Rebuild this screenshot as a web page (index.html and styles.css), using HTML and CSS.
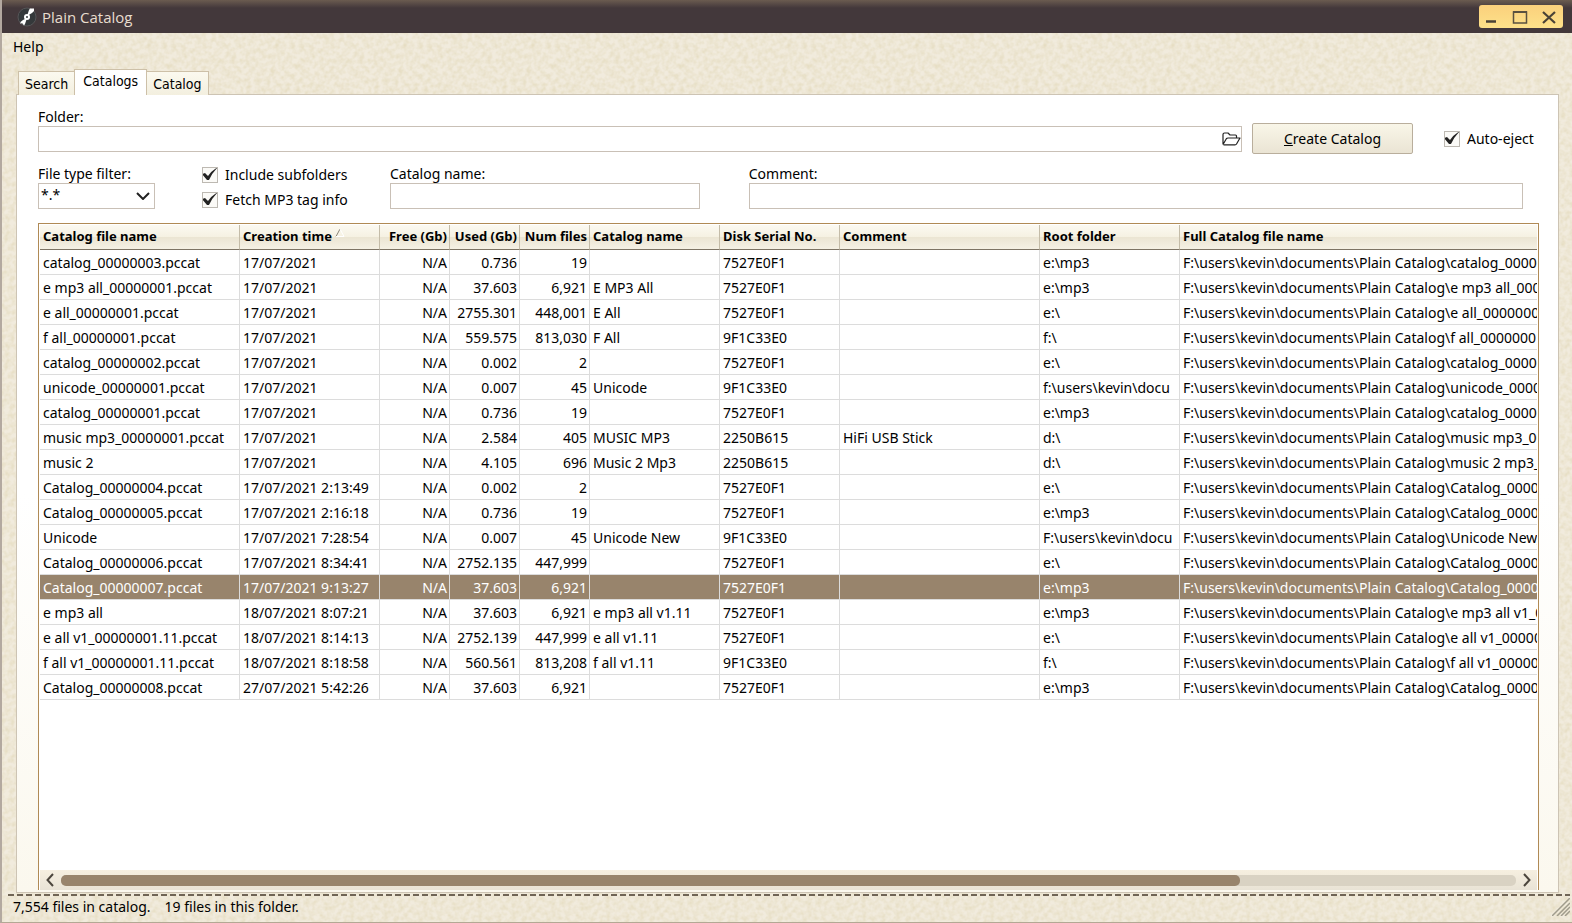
FILE: index.html
```html
<!DOCTYPE html>
<html lang="en">
<head>
    <meta charset="UTF-8">
    <meta name="viewport" content="width=device-width, initial-scale=1.0">
    <title>Plain Catalog</title>
    <link rel="stylesheet" href="styles.css">
</head>
<body>
    <header class="titlebar">
        <svg class="app-icon" width="20" height="20" viewBox="0 0 20 20">
            <circle cx="10" cy="10" r="9" fill="#34383a" stroke="#555557"/>
            <path d="M10 9L12 3L13 1.500H17V4L15 6ZM10 11L8 17L7 18.500L5 16L3.500 17V15L6 13Z" fill="#fff"/>
            <circle cx="10" cy="10" r="3" fill="#fff"/>
            <circle cx="10" cy="10" r="1" fill="#34383a"/>
        </svg>
        <span class="app-title">Plain Catalog</span>
        <div class="window-buttons">
            <button type="button" aria-label="Minimize"><svg width="16" height="16" viewBox="0 0 16 16"><path d="M3 12.500h10" stroke="#4a4236" stroke-width="2.500"/></svg></button>
            <button type="button" aria-label="Maximize"><svg width="16" height="16" viewBox="0 0 16 16"><path d="M1.500 3h13v11h-13z" fill="none" stroke="#5a5140" stroke-width="1.500"/><path d="M1 3h14" stroke="#5a5140" stroke-width="2"/></svg></button>
            <button type="button" aria-label="Close"><svg width="16" height="16" viewBox="0 0 16 16"><path d="M2 3l12 11M14 3L2 14" stroke="#4a4236" stroke-width="2.200"/></svg></button>
        </div>
    </header>

    <nav class="menu">
        <button type="button">Help</button>
    </nav>

    <div class="tabs" role="tablist">
        <button type="button" class="tab" role="tab">Search</button>
        <button type="button" class="tab active" role="tab" aria-selected="true">Catalogs</button>
        <button type="button" class="tab" role="tab">Catalog</button>
    </div>

    <main class="panel">
        <div class="folder-row">
            <div class="field folder">
                <label for="folder">Folder:</label>
                <div class="folder-box">
                    <input type="text" id="folder">
                    <button type="button" class="browse" aria-label="Browse">
                        <svg width="20" height="16" viewBox="0 0 20 16"><path d="M2 13.500V3.500Q2 2 3.500 2H7l2 2h5.500q1 0 1 1v2M2 13.500L5.500 7.500Q6 7 7 7H19L15.500 13q-.5.800-1.500.800H2.500" fill="none" stroke="#222" stroke-width="1.200" stroke-linejoin="round"/></svg>
                    </button>
                </div>
            </div>
            <button type="button" class="create"><u>C</u>reate Catalog</button>
            <label class="check"><input type="checkbox" checked>Auto-eject</label>
        </div>

        <div class="options-row">
            <div class="field filter">
                <label for="filter">File type filter:</label>
                <select id="filter"><option>*.*</option></select>
            </div>
            <div class="checks">
                <label class="check"><input type="checkbox" checked>Include subfolders</label>
                <label class="check"><input type="checkbox" checked>Fetch MP3 tag info</label>
            </div>
            <div class="field name">
                <label for="name">Catalog name:</label>
                <input type="text" id="name">
            </div>
            <div class="field comment">
                <label for="comment">Comment:</label>
                <input type="text" id="comment">
            </div>
        </div>

        <div class="grid">
            <div class="grid-view">
                <table>
                    <colgroup>
                        <col class="w200"><col class="w140"><col class="w70"><col class="w70"><col class="w70">
                        <col class="w130"><col class="w120"><col class="w200"><col class="w140"><col>
                    </colgroup>
                    <thead>
                        <tr>
                            <th>Catalog file name</th>
                            <th>Creation time<svg class="sort" width="12" height="10" viewBox="0 0 12 10"><path d="M2 8.500L6 1" stroke="#8b8578" fill="none"/><path d="M6 1L10 8.500H2" stroke="#fff" fill="none"/></svg></th>
                            <th class="num">Free (Gb)</th>
                            <th class="num">Used (Gb)</th>
                            <th class="num">Num files</th>
                            <th>Catalog name</th>
                            <th>Disk Serial No.</th>
                            <th>Comment</th>
                            <th>Root folder</th>
                            <th>Full Catalog file name</th>
                        </tr>
                    </thead>
                    <tbody>
                        <tr><td>catalog_00000003.pccat</td><td>17/07/2021</td><td class="num">N/A</td><td class="num">0.736</td><td class="num">19</td><td></td><td>7527E0F1</td><td></td><td>e:\mp3</td><td>F:\users\kevin\documents\Plain Catalog\catalog_00000</td></tr>
                        <tr><td>e mp3 all_00000001.pccat</td><td>17/07/2021</td><td class="num">N/A</td><td class="num">37.603</td><td class="num">6,921</td><td>E MP3 All</td><td>7527E0F1</td><td></td><td>e:\mp3</td><td>F:\users\kevin\documents\Plain Catalog\e mp3 all_000</td></tr>
                        <tr><td>e all_00000001.pccat</td><td>17/07/2021</td><td class="num">N/A</td><td class="num">2755.301</td><td class="num">448,001</td><td>E All</td><td>7527E0F1</td><td></td><td>e:\</td><td>F:\users\kevin\documents\Plain Catalog\e all_0000000</td></tr>
                        <tr><td>f all_00000001.pccat</td><td>17/07/2021</td><td class="num">N/A</td><td class="num">559.575</td><td class="num">813,030</td><td>F All</td><td>9F1C33E0</td><td></td><td>f:\</td><td>F:\users\kevin\documents\Plain Catalog\f all_00000001</td></tr>
                        <tr><td>catalog_00000002.pccat</td><td>17/07/2021</td><td class="num">N/A</td><td class="num">0.002</td><td class="num">2</td><td></td><td>7527E0F1</td><td></td><td>e:\</td><td>F:\users\kevin\documents\Plain Catalog\catalog_00000</td></tr>
                        <tr><td>unicode_00000001.pccat</td><td>17/07/2021</td><td class="num">N/A</td><td class="num">0.007</td><td class="num">45</td><td>Unicode</td><td>9F1C33E0</td><td></td><td>f:\users\kevin\docu</td><td>F:\users\kevin\documents\Plain Catalog\unicode_0000</td></tr>
                        <tr><td>catalog_00000001.pccat</td><td>17/07/2021</td><td class="num">N/A</td><td class="num">0.736</td><td class="num">19</td><td></td><td>7527E0F1</td><td></td><td>e:\mp3</td><td>F:\users\kevin\documents\Plain Catalog\catalog_00000</td></tr>
                        <tr><td>music mp3_00000001.pccat</td><td>17/07/2021</td><td class="num">N/A</td><td class="num">2.584</td><td class="num">405</td><td>MUSIC MP3</td><td>2250B615</td><td>HiFi USB Stick</td><td>d:\</td><td>F:\users\kevin\documents\Plain Catalog\music mp3_00</td></tr>
                        <tr><td>music 2</td><td>17/07/2021</td><td class="num">N/A</td><td class="num">4.105</td><td class="num">696</td><td>Music 2 Mp3</td><td>2250B615</td><td></td><td>d:\</td><td>F:\users\kevin\documents\Plain Catalog\music 2 mp3_</td></tr>
                        <tr><td>Catalog_00000004.pccat</td><td>17/07/2021 2:13:49</td><td class="num">N/A</td><td class="num">0.002</td><td class="num">2</td><td></td><td>7527E0F1</td><td></td><td>e:\</td><td>F:\users\kevin\documents\Plain Catalog\Catalog_00000</td></tr>
                        <tr><td>Catalog_00000005.pccat</td><td>17/07/2021 2:16:18</td><td class="num">N/A</td><td class="num">0.736</td><td class="num">19</td><td></td><td>7527E0F1</td><td></td><td>e:\mp3</td><td>F:\users\kevin\documents\Plain Catalog\Catalog_00000</td></tr>
                        <tr><td>Unicode</td><td>17/07/2021 7:28:54</td><td class="num">N/A</td><td class="num">0.007</td><td class="num">45</td><td>Unicode New</td><td>9F1C33E0</td><td></td><td>F:\users\kevin\docu</td><td>F:\users\kevin\documents\Plain Catalog\Unicode New_</td></tr>
                        <tr><td>Catalog_00000006.pccat</td><td>17/07/2021 8:34:41</td><td class="num">N/A</td><td class="num">2752.135</td><td class="num">447,999</td><td></td><td>7527E0F1</td><td></td><td>e:\</td><td>F:\users\kevin\documents\Plain Catalog\Catalog_00000</td></tr>
                        <tr class="selected"><td>Catalog_00000007.pccat</td><td>17/07/2021 9:13:27</td><td class="num">N/A</td><td class="num">37.603</td><td class="num">6,921</td><td></td><td>7527E0F1</td><td></td><td>e:\mp3</td><td>F:\users\kevin\documents\Plain Catalog\Catalog_00000</td></tr>
                        <tr><td>e mp3 all</td><td>18/07/2021 8:07:21</td><td class="num">N/A</td><td class="num">37.603</td><td class="num">6,921</td><td>e mp3 all v1.11</td><td>7527E0F1</td><td></td><td>e:\mp3</td><td>F:\users\kevin\documents\Plain Catalog\e mp3 all v1_0</td></tr>
                        <tr><td>e all v1_00000001.11.pccat</td><td>18/07/2021 8:14:13</td><td class="num">N/A</td><td class="num">2752.139</td><td class="num">447,999</td><td>e all v1.11</td><td>7527E0F1</td><td></td><td>e:\</td><td>F:\users\kevin\documents\Plain Catalog\e all v1_00000</td></tr>
                        <tr><td>f all v1_00000001.11.pccat</td><td>18/07/2021 8:18:58</td><td class="num">N/A</td><td class="num">560.561</td><td class="num">813,208</td><td>f all v1.11</td><td>9F1C33E0</td><td></td><td>f:\</td><td>F:\users\kevin\documents\Plain Catalog\f all v1_00000</td></tr>
                        <tr><td>Catalog_00000008.pccat</td><td>27/07/2021 5:42:26</td><td class="num">N/A</td><td class="num">37.603</td><td class="num">6,921</td><td></td><td>7527E0F1</td><td></td><td>e:\mp3</td><td>F:\users\kevin\documents\Plain Catalog\Catalog_00000</td></tr>
                    </tbody>
                </table>
            </div>
            <div class="scrollbar">
                <button type="button" aria-label="Scroll left"><svg width="8" height="14" viewBox="0 0 8 14"><path d="M7 1L1.500 7L7 13" fill="none" stroke="#4c463d" stroke-width="2"/></svg></button>
                <div class="track"><div class="thumb"></div></div>
                <button type="button" aria-label="Scroll right"><svg width="8" height="14" viewBox="0 0 8 14"><path d="M1 1L6.500 7L1 13" fill="none" stroke="#4c463d" stroke-width="2"/></svg></button>
            </div>
        </div>
    </main>

    <footer class="status">
        <span>7,554 files in catalog.</span>
        <span>19 files in this folder.</span>
        <svg class="grip" width="18" height="18" viewBox="0 0 18 18"><path d="M0 18L18 0M5 18L18 5M9 18L18 9M13 18L18 13" stroke="#a09c8c" stroke-width="1.500"/></svg>
    </footer>
</body>
</html>
```
FILE: styles.css
```css
* {
    box-sizing: border-box;
}
body {
    margin: 0;
    height: 100vh;
    display: flex;
    flex-direction: column;
    overflow: hidden;
    border-left: 2px solid #b3a9a0;
    border-bottom: 1px solid #b3a894;
    background-color: #f1ebdd;
    background-image: url("data:image/svg+xml,%3Csvg xmlns='http://www.w3.org/2000/svg' width='128' height='128'%3E%3Cfilter id='n' x='0' y='0' width='1' height='1' color-interpolation-filters='sRGB'%3E%3CfeTurbulence type='fractalNoise' baseFrequency='0.2' numOctaves='2' stitchTiles='stitch'/%3E%3CfeColorMatrix values='0 0 0 0 0.88 0 0 0 0 0.84 0 0 0 0 0.71 1.200 0 0 0 -0.4'/%3E%3C/filter%3E%3Crect width='128' height='128' filter='url(%23n)'/%3E%3C/svg%3E");
    font-family: "Noto Sans", "DejaVu Sans Condensed", sans-serif;
    font-size: 14px;
    line-height: 16px;
    color: #000;
}
button, input, select {
    font: inherit;
    color: inherit;
}
button {
    padding: 0;
    border: none;
    background: none;
}

.titlebar {
    height: 33px;
    display: flex;
    align-items: center;
    gap: 5px;
    padding: 0 9px 0 15px;
    background: linear-gradient(#6b5c50, #43383b 8px);
    color: #e8ddcf;
    font-family: "Open Sans", sans-serif;
    font-size: 15px;
}
.window-buttons {
    margin-left: auto;
    height: 23px;
    width: 84px;
    display: flex;
    justify-content: space-between;
    align-items: center;
    padding: 0 6px 0 4px;
    border-radius: 3px;
    background: linear-gradient(#fbd07c, #fde18a);
}
.window-buttons svg, .scrollbar svg, .browse svg {
    display: block;
}

.menu {
    height: 36px;
    padding: 6px 11px;
}

.tabs {
    display: flex;
    align-items: flex-end;
    padding-left: 16px;
    height: 26px;
    position: relative;
    font-family: "DejaVu Sans Condensed", sans-serif;
}
.tab {
    height: 24px;
    padding: 0 6px;
    border: 1px solid #cdc0a8;
    border-bottom: none;
    background: linear-gradient(#fbf9ef, #f3efdf);
}
.tab.active {
    height: 26px;
    padding: 0 8px 4px;
    margin: 0 -1px;
    background: #fff;
    z-index: 1;
}

.panel {
    flex: 1;
    min-height: 0;
    display: flex;
    flex-direction: column;
    margin: -1px 13px 0 14px;
    padding: 14px 19px 2px 21px;
    border: 1px solid #cdc4b4;
    background: linear-gradient(#fff 50%, #fbf8ee);
}
.field {
    display: flex;
    flex-direction: column;
}
.field label {
    margin-bottom: 1px;
    white-space: nowrap;
}
input[type="text"], select, .folder-box {
    width: 100%;
    height: 26px;
    border: 1px solid #c9c0b6;
    border-radius: 0;
    background-color: #fff;
}
.folder-row {
    display: flex;
    align-items: flex-end;
}
.folder {
    flex: 1;
}
.folder-box {
    display: flex;
    align-items: center;
}
.folder-box input[type="text"] {
    height: 24px;
    border: none;
}
.create {
    width: 161px;
    height: 31px;
    margin: 0 31px -2px 10px;
    border: 1px solid #b9ae9c;
    border-radius: 2px;
    background: linear-gradient(#f9f6e8, #eae4d4);
}
.check {
    display: flex;
    align-items: center;
    gap: 7px;
    white-space: nowrap;
}
.folder-row .check {
    width: 95px;
    height: 26px;
}
.check input {
    appearance: none;
    flex: none;
    width: 16px;
    height: 16px;
    margin: 0;
    border: 1px solid #bdb9b2;
    background: #fbfaf7 url("data:image/svg+xml,%3Csvg xmlns='http://www.w3.org/2000/svg' viewBox='0 0 16 16'%3E%3Cpath d='M0 7L3 6L6 9Q9 4 16 0Q10 6 7 13H5Z' fill='%23222'/%3E%3C/svg%3E") center / 16px no-repeat;
}

.options-row {
    display: flex;
    align-items: flex-end;
    margin: 14px 16px 0 0;
}
.filter {
    width: 117px;
}
select {
    appearance: none;
    padding: 0 2px 2px;
    background: #fff url("data:image/svg+xml,%3Csvg xmlns='http://www.w3.org/2000/svg' width='14' height='8'%3E%3Cpath d='M1 1L7 7L13 1' fill='none' stroke='%23222' stroke-width='2'/%3E%3C/svg%3E") right 4px center no-repeat;
}
.checks {
    width: 188px;
    margin-left: 47px;
    display: flex;
    flex-direction: column;
    gap: 9px;
    padding-bottom: 1px;
}
.name {
    flex: 2;
}
.comment {
    flex: 5;
    margin-left: 49px;
}

.grid {
    flex: 1;
    min-height: 0;
    margin-top: 14px;
    display: flex;
    flex-direction: column;
    padding: 1px 1px 0;
    border: 1px solid #b08a55;
    border-bottom: none;
    background: #fff;
}
.grid-view {
    flex: 1;
    min-height: 0;
    overflow: hidden;
}
table {
    width: 100%;
    table-layout: fixed;
    border-collapse: separate;
    border-spacing: 0;
}
.w70 { width: 70px; }
.w120 { width: 120px; }
.w130 { width: 130px; }
.w140 { width: 140px; }
.w200 { width: 200px; }
th, td {
    height: 25px;
    padding: 2px 2px 0 3px;
    border-right: 1px solid #dcdcdc;
    border-bottom: 1px solid #dcdcdc;
    text-align: left;
    white-space: nowrap;
    overflow: hidden;
}
th {
    padding: 0 2px 2px 3px;
    font-size: 13px;
    border-right-color: #c4bca8;
    border-bottom-color: #7d7464;
    background: linear-gradient(#fbf9f1, #f5f1e2 50%, #ebe5d3 52%, #f5f1e4);
}
th:last-child, td:last-child {
    padding-right: 0;
    border-right: none;
}
.num {
    text-align: right;
}
.sort {
    margin-left: 2px;
    vertical-align: top;
}
.selected td {
    background: #98846c;
    color: #fff;
}

.scrollbar {
    height: 20px;
    display: flex;
    align-items: center;
    gap: 7px;
    padding: 0 6px;
    background: linear-gradient(#f6efe0, #e9e3d6);
}
.track {
    flex: 1;
    height: 11px;
    border-radius: 5px;
    background: #d9d2c3;
}
.thumb {
    width: 81%;
    height: 11px;
    border-radius: 5px;
    background: #98846c;
}

.status {
    height: 29px;
    display: flex;
    align-items: center;
    gap: 14px;
    margin: 0 2px 0 6px;
    padding: 0 0 2px 5px;
    background: repeating-linear-gradient(90deg, #6f6455 0 6px, transparent 6px 9px) 0 1px / 100% 2px no-repeat;
}
.grip {
    margin-left: auto;
}
```
